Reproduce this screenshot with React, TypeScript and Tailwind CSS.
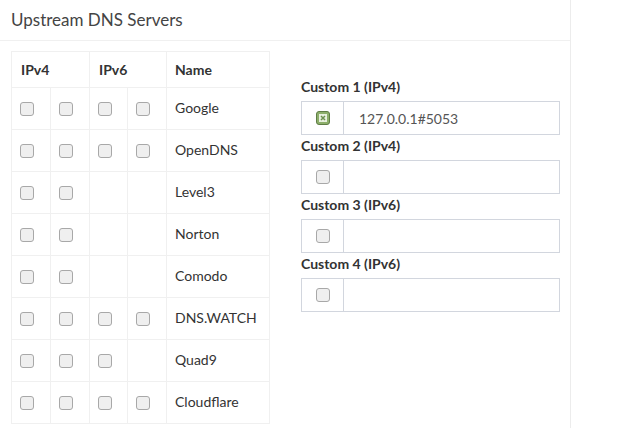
import { FC } from 'react';

const Box: FC<{ checked?: boolean }> = ({ checked }) =>
  checked ? (
    <span className="inline-flex w-[14px] h-[14px] items-center justify-center rounded-[3px] border border-[#5f7d45] bg-[#8daf6b]">
      <svg width="8" height="8" viewBox="0 0 8 8">
        <rect x="0" y="0" width="8" height="8" fill="#e8f0df" />
        <path d="M2 2 L6 6 M6 2 L2 6" stroke="#6d9050" strokeWidth="1.5" />
      </svg>
    </span>
  ) : (
    <span className="inline-block w-[14px] h-[14px] rounded-[3px] border border-[#a8a8a8] bg-[#efefef]" />
  );

const servers: { name: string; v4: number; v6: number }[] = [
  { name: 'Google', v4: 2, v6: 2 },
  { name: 'OpenDNS', v4: 2, v6: 2 },
  { name: 'Level3', v4: 2, v6: 0 },
  { name: 'Norton', v4: 2, v6: 0 },
  { name: 'Comodo', v4: 2, v6: 0 },
  { name: 'DNS.WATCH', v4: 2, v6: 2 },
  { name: 'Quad9', v4: 2, v6: 1 },
  { name: 'Cloudflare', v4: 2, v6: 2 },
];

const custom = [
  { label: 'Custom 1 (IPv4)', value: '127.0.0.1#5053', checked: true },
  { label: 'Custom 2 (IPv4)', value: '' },
  { label: 'Custom 3 (IPv6)', value: '' },
  { label: 'Custom 4 (IPv6)', value: '' },
];

const cell = 'border border-[#f0f0f0] h-[42px] p-0';

const App: FC = () => {
  return (
    <div className="w-[635px] h-[428px] bg-white overflow-hidden font-['Source_Sans_Pro','Lato',sans-serif] text-[#333]">
      <div className="w-[571px] h-full border-r border-[#ececec]">
        <div className="h-[41px] border-b border-[#f0f0f0] px-[11px] flex items-center">
          <h3 className="text-[17px] text-[#444] font-normal">Upstream DNS Servers</h3>
        </div>
        <div className="flex pt-[10px] pl-[11px]">
          <table className="border-collapse table-fixed text-[14px] w-[259px]">
            <colgroup>
              <col className="w-[39px]" />
              <col className="w-[39px]" />
              <col className="w-[38px]" />
              <col className="w-[39px]" />
              <col />
            </colgroup>
            <thead>
              <tr>
                <th colSpan={2} className="border border-[#f0f0f0] h-[36px] text-left pl-[9px] pb-[1px] font-bold">IPv4</th>
                <th colSpan={2} className="border border-[#f0f0f0] text-left pl-[9px] pb-[1px] font-bold">IPv6</th>
                <th className="border border-[#f0f0f0] text-left pl-[8px] pb-[1px] font-bold">Name</th>
              </tr>
            </thead>
            <tbody>
              {servers.map((s) => (
                <tr key={s.name}>
                  {[0, 1, 2, 3].map((i) => {
                    const on = i < 2 ? i < s.v4 : i - 2 < s.v6;
                    return (
                      <td key={i} className={`${cell} pl-[8px] pt-[3px]`}>
                        {on && <Box />}
                      </td>
                    );
                  })}
                  <td className={`${cell} pl-[8px] pb-[2px]`}>{s.name}</td>
                </tr>
              ))}
            </tbody>
          </table>
          <div className="ml-[31px] mt-[25px] flex flex-col w-[259px]">
            {custom.map((c) => (
              <div key={c.label} className="flex flex-col">
                <label className="text-[14px] font-bold h-[25px] leading-[22px]">{c.label}</label>
                <div className="flex h-[34px] border border-[#d2d6de]">
                  <div className="w-[42px] flex items-center justify-center border-r border-[#d2d6de]">
                    <Box checked={c.checked} />
                  </div>
                  <div className="flex-1 flex items-center pl-[15px] text-[14px] text-[#555]">{c.value}</div>
                </div>
              </div>
            ))}
          </div>
        </div>
      </div>
    </div>
  );
};

export default App;
